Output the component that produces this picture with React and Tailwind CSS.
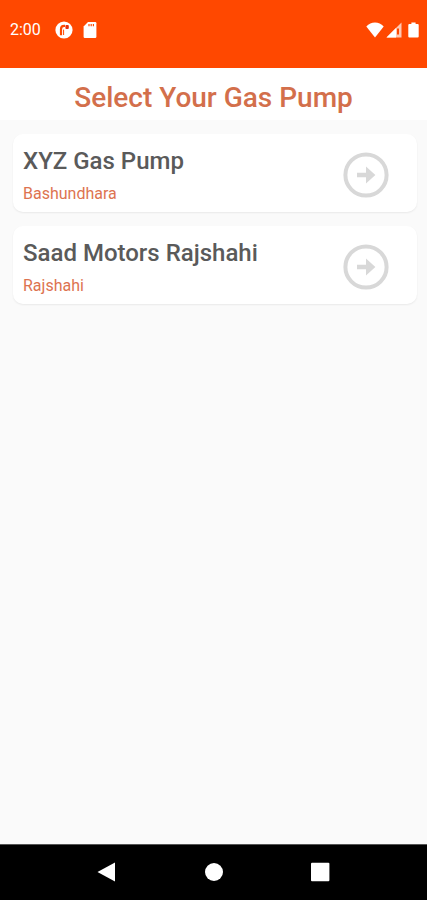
import React from 'react';

const pumps = [
  { name: 'XYZ Gas Pump', area: 'Bashundhara' },
  { name: 'Saad Motors Rajshahi', area: 'Rajshahi' }
];

const StatusBar = () => (
  <div className="h-17 bg-[#ff4800] flex items-center justify-between pl-[10px] pr-2 pb-2 text-white">
    <div className="flex items-center">
      <span className="text-base leading-5">2:00</span>
      <svg className="w-[18px] h-[18px] ml-[14px]" viewBox="0 0 18 18">
        <circle cx="9" cy="9" r="8.6" fill="#fff" />
        <path d="M6 14.2V8.2Q6 4.9 9.2 4.9H10" fill="none" stroke="#ff4800" strokeWidth="2.2" />
        <path d="M8.6 8.6V14" stroke="#ff4800" strokeWidth="1" />
        <rect x="10.4" y="4" width="3.4" height="4" rx="1" fill="#e8300c" />
      </svg>
      <svg className="w-[14px] h-[18px] ml-[10px]" viewBox="0 0 14 18">
        <path d="M5 1h7.2Q13.4 1 13.4 2.2V15.8Q13.4 17 12.2 17H1.8Q.6 17 .6 15.8V5.6z" fill="#fff" />
        <path d="M6 3v2.2M8.2 3v2.2M10.4 3v2.2" stroke="#ff4800" strokeWidth="1.2" />
      </svg>
    </div>
    <div className="flex items-center">
      <svg className="w-[18px] h-[16px]" viewBox="0 0 18 16">
        <path d="M9 15.4L.3 4.6Q4 .6 9 .6t8.7 4z" fill="#fff" />
      </svg>
      <svg className="w-4 h-4 ml-[2px]" viewBox="0 0 16 16">
        <path d="M15.5.5V15.5H.5z" fill="#fff" fillOpacity="0.7" />
        <path d="M10 6V15.5H.5z" fill="#fff" />
        <path d="M11 6.4h2v6.2h-2z" fill="#ff4800" />
      </svg>
      <svg className="w-[11px] h-[16px] ml-[6px]" viewBox="0 0 11 16">
        <path d="M3.4.4h4.2V2h2.1q1 0 1 1v11.6q0 1-1 1H1.3q-1 0-1-1V3q0-1 1-1h2.1z" fill="#fff" />
      </svg>
    </div>
  </div>
);

const PumpCard = ({ pump }) => (
  <li className="flex items-center justify-between bg-white rounded-[10px] shadow-[0_1px_2px_rgba(0,0,0,0.07)] pl-[10px] pr-7 pt-3 pb-2">
    <div>
      <h2 className="text-2xl leading-[30px] font-medium text-[#5a5a5a]">{pump.name}</h2>
      <p className="text-base leading-5 pt-2 text-[#dd7350]">{pump.area}</p>
    </div>
    <button type="button" aria-label={`Select ${pump.name}`} className="shrink-0">
      <svg className="w-[46px] h-[46px]" viewBox="0 0 46 46">
        <circle cx="23" cy="23" r="20.6" fill="none" stroke="#d8d8d8" strokeWidth="4" />
        <path d="M14 20.8h9v-6.3L32.4 23 23 31.5v-6.3h-9z" fill="#d8d8d8" />
      </svg>
    </button>
  </li>
);

const NavBar = () => (
  <nav className="h-14 pb-[2px] bg-black border-t border-[#555555]">
    <div className="w-3/4 h-full mx-auto grid grid-cols-3">
      <button type="button" aria-label="Back" className="flex items-center justify-center">
        <svg className="w-5 h-5" viewBox="0 0 20 20">
          <path d="M18 .5v19L.5 10z" fill="#fff" />
        </svg>
      </button>
      <button type="button" aria-label="Home" className="flex items-center justify-center">
        <svg className="w-5 h-5" viewBox="0 0 20 20">
          <circle cx="10" cy="10" r="9" fill="#fff" />
        </svg>
      </button>
      <button type="button" aria-label="Recent apps" className="flex items-center justify-center">
        <svg className="w-5 h-5" viewBox="0 0 20 20">
          <rect x="1" y="0.8" width="18.4" height="18.4" rx="1" fill="#fff" />
        </svg>
      </button>
    </div>
  </nav>
);

const App = () => {
  return (
    <div className="min-h-screen flex flex-col bg-[#fafafa] font-[Roboto,sans-serif]">
      <StatusBar />
      <h1 className="bg-white pt-[10px] pb-[2px] text-center text-[28px] leading-10 font-medium text-[#d36f4b]">
        Select Your Gas Pump
      </h1>
      <main className="grow pl-[13px] pr-[10px] pt-[14px]">
        <ul className="flex flex-col gap-[14px]">
          {pumps.map((pump) => (
            <PumpCard key={pump.name} pump={pump} />
          ))}
        </ul>
      </main>
      <NavBar />
    </div>
  );
};

export default App;
